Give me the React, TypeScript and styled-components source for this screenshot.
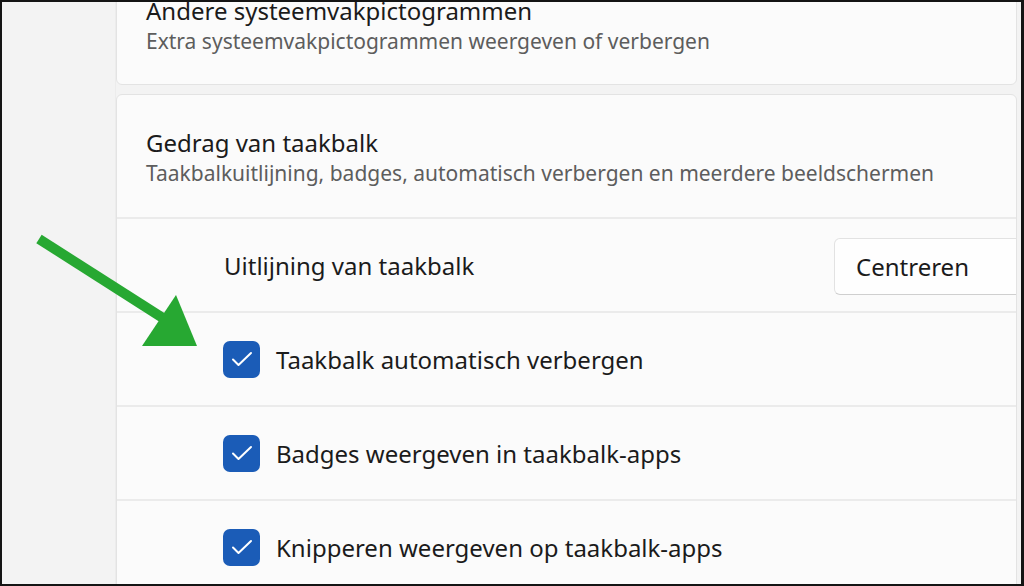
import React from "react";
import styled, { createGlobalStyle } from "styled-components";

const Global = createGlobalStyle`
  html, body { margin: 0; padding: 0; background: #f3f3f3; }
  body { font-family: "Noto Sans", "Open Sans", sans-serif; }
  * { box-sizing: border-box; }
`;

const Frame = styled.div`
  position: relative;
  width: 1024px;
  height: 586px;
  border: 2px solid #141414;
  border-right-width: 3px;
  background: #f3f3f3;
  display: flex;
  overflow: hidden;
`;

const Sidebar = styled.div`
  width: 114px;
  flex: none;
  background: #f3f3f3;
  border-right: 1px solid #ececec;
`;

const Content = styled.div`
  flex: 1;
  display: flex;
  flex-direction: column;
  gap: 9px;
  padding-right: 4px;
  overflow: hidden;
`;

const Card = styled.section<{ $scrolled?: boolean }>`
  flex: none;
  background: #fbfbfb;
  border: 1px solid #e3e3e3;
  border-radius: 6px;
  overflow: hidden;
  margin-top: ${(p) => (p.$scrolled ? "-42px" : "0")};
`;

const Header = styled.div<{ $top: number; $bottom: number }>`
  padding: ${(p) => p.$top}px 29px ${(p) => p.$bottom}px;
  display: flex;
  flex-direction: column;
`;

const Title = styled.div`
  font-size: 24px;
  line-height: 30px;
  color: #1b1b1b;
  white-space: nowrap;
`;

const Subtitle = styled.div`
  font-size: 21px;
  line-height: 31px;
  color: #5d5d5d;
  white-space: nowrap;
`;

const Row = styled.div<{ $indent: number }>`
  height: 94px;
  border-top: 2px solid #ebebeb;
  display: flex;
  align-items: center;
  padding-left: ${(p) => p.$indent}px;
  gap: 16px;
`;

const RowLabel = styled.span`
  font-size: 24px;
  color: #1b1b1b;
  flex: 1;
  white-space: nowrap;
`;

const Dropdown = styled.div`
  width: 212px;
  height: 57px;
  margin-right: -30px;
  background: #fefefe;
  border: 1px solid #e2e2e2;
  border-bottom-color: #cfcfcf;
  border-radius: 6px;
  display: flex;
  align-items: center;
  padding-left: 21px;
  font-size: 24px;
  color: #1b1b1b;
  margin-top: 2px;
`;

const Check = styled.span`
  width: 37px;
  height: 37px;
  flex: none;
  border-radius: 7px;
  background: #1b5cb7;
  display: flex;
  align-items: center;
  justify-content: center;
`;

const Arrow = styled.svg`
  position: absolute;
  left: 0;
  top: 0;
  pointer-events: none;
`;

const CheckMark = () => (
  <svg width="24" height="24" viewBox="0 0 24 24">
    <path d="M3 12.5 L8.5 18 L21 6" fill="none" stroke="#fff" strokeWidth="2" strokeLinecap="round" strokeLinejoin="round" />
  </svg>
);

const CheckRow = ({ label }: { label: string }) => (
  <Row $indent={106}>
    <Check>
      <CheckMark />
    </Check>
    <RowLabel>{label}</RowLabel>
  </Row>
);

export default function App() {
  return (
    <>
      <Global />
      <Frame>
        <Sidebar />
        <Content>
          <Card $scrolled>
            <Header $top={35} $bottom={27}>
              <Title>Andere systeemvakpictogrammen</Title>
              <Subtitle>Extra systeemvakpictogrammen weergeven of verbergen</Subtitle>
            </Header>
          </Card>
          <Card>
            <Header $top={33} $bottom={28}>
              <Title>Gedrag van taakbalk</Title>
              <Subtitle>Taakbalkuitlijning, badges, automatisch verbergen en meerdere beeldschermen</Subtitle>
            </Header>
            <Row $indent={107}>
              <RowLabel>Uitlijning van taakbalk</RowLabel>
              <Dropdown>Centreren</Dropdown>
            </Row>
            <CheckRow label="Taakbalk automatisch verbergen" />
            <CheckRow label="Badges weergeven in taakbalk-apps" />
            <CheckRow label="Knipperen weergeven op taakbalk-apps" />
          </Card>
        </Content>
        <Arrow width="1024" height="586" viewBox="0 0 1024 586">
          <line x1="37" y1="237" x2="164" y2="318" stroke="#27a832" strokeWidth="10" />
          <polygon points="140,344 195,344 174,293" fill="#27a832" />
        </Arrow>
      </Frame>
    </>
  );
}
